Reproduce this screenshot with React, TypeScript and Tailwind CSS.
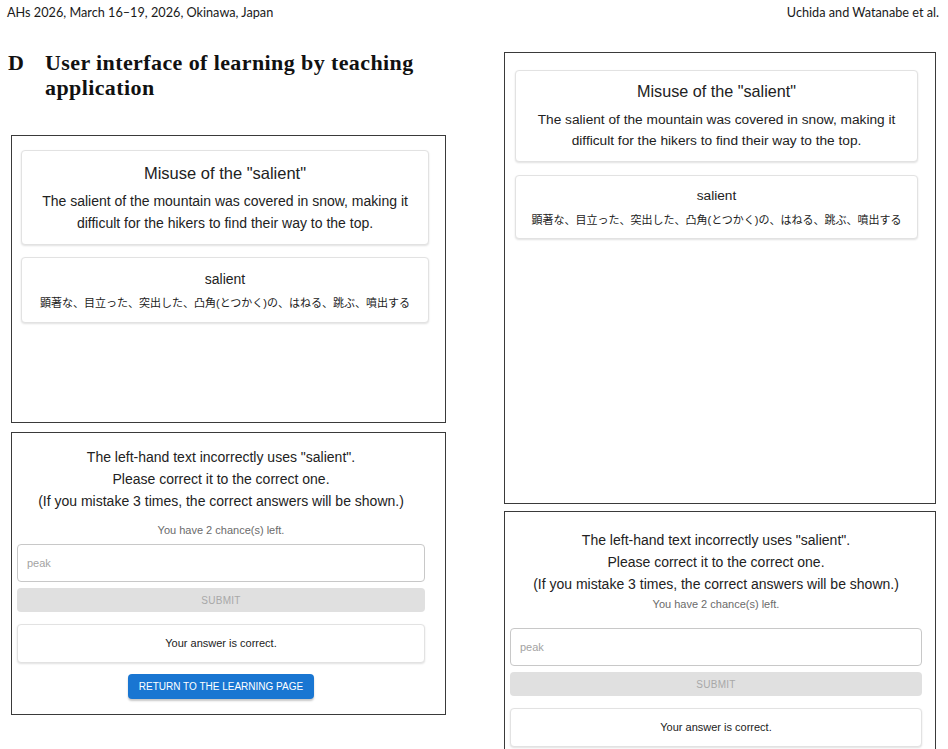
import React from "react";

type Size = "wide" | "narrow";

const sans = { fontFamily: '"Liberation Sans", Arial, "Noto Sans CJK JP", sans-serif' };

const WordCards: React.FC<{ size: Size }> = ({ size }) => {
  const wide = size === "wide";
  return (
    <>
      <div
        className={`rounded-[4px] border border-[#e2e2e2] bg-white text-center text-[#222] shadow-[0_1px_2px_rgba(0,0,0,0.12)] ${
          wide ? "w-[408px] pt-[11px] pb-[10px]" : "w-[403px] pt-[10px] pb-[10px]"
        }`}
      >
        <h2 className={wide ? "text-[16.5px] leading-[22px]" : "text-[16.2px] leading-[21px]"}>
          Misuse of the "salient"
        </h2>
        <p className={wide ? "mt-[6px] text-[14px] leading-[22px]" : "mt-[7px] text-[13.7px] leading-[21px]"}>
          The salient of the mountain was covered in snow, making it
          <br />
          difficult for the hikers to find their way to the top.
        </p>
      </div>
      <div
        className={`rounded-[4px] border border-[#e2e2e2] bg-white text-center text-[#222] shadow-[0_1px_2px_rgba(0,0,0,0.12)] ${
          wide ? "mt-[12px] w-[408px] pt-[11px] pb-[10px]" : "mt-[13px] w-[403px] pt-[10px] pb-[9px]"
        }`}
      >
        <div className={wide ? "text-[14px] leading-[20px]" : "text-[13.7px] leading-[20px]"}>salient</div>
        <div className="mt-[5px] text-[11px] leading-[18px]">
          顕著な、目立った、突出した、凸角(とつかく)の、はねる、跳ぶ、噴出する
        </div>
      </div>
    </>
  );
};

const AnswerForm: React.FC<{ size: Size }> = ({ size }) => {
  const wide = size === "wide";
  return (
    <div className={wide ? "w-[408px]" : "w-[412px]"}>
      <p className="text-center text-[14px] leading-[22px] text-[#222]">
        The left-hand text incorrectly uses "salient".
        <br />
        Please correct it to the correct one.
        <br />
        (If you mistake 3 times, the correct answers will be shown.)
      </p>
      <p
        className={`text-center text-[11px] leading-[16px] text-[#6b6b6b] ${
          wide ? "mt-[10px]" : "mt-[1px]"
        }`}
      >
        You have 2 chance(s) left.
      </p>
      <input
        readOnly
        placeholder="peak"
        className={`block h-[38px] w-full rounded-[4px] border border-[#c8c8c8] px-[9px] text-[11px] outline-none placeholder:text-[#a3a3a3] ${
          wide ? "mt-[6px]" : "mt-[16px]"
        }`}
        style={sans}
      />
      <button
        disabled
        className="mt-[6px] block h-[24px] w-full rounded-[4px] bg-[#e0e0e0] text-[10px] tracking-[0.3px] text-[#a8a8a8]"
        style={sans}
      >
        SUBMIT
      </button>
      <div className="mt-[12px] flex h-[39px] items-center justify-center rounded-[4px] border border-[#e2e2e2] bg-white text-[11px] text-[#222] shadow-[0_1px_2px_rgba(0,0,0,0.12)]">
        Your answer is correct.
      </div>
      {wide && (
        <div className="mt-[11px] flex justify-center">
          <button
            className="h-[25px] w-[186px] rounded-[4px] bg-[#1976d2] text-[10px] text-white shadow-[0_2px_2px_rgba(0,0,0,0.22)]"
            style={sans}
          >
            RETURN TO THE LEARNING PAGE
          </button>
        </div>
      )}
    </div>
  );
};

export default function App() {
  return (
    <div className="relative h-[749px] w-[948px] overflow-hidden bg-white text-black">
      {/* running head */}
      <div
        className="flex h-[24px] justify-between pl-[7px] pr-[9px] pt-[4px] text-[12.7px] leading-[16px] text-[#1a1a1a]"
        style={{ fontFamily: 'Lato, "Open Sans", sans-serif' }}
      >
        <span>AHs 2026, March 16–19, 2026, Okinawa, Japan</span>
        <span>Uchida and Watanabe et al.</span>
      </div>

      <div className="flex">
        {/* left column: section title + first screen */}
        <div className="w-[504px] shrink-0">
          <h1
            className="mt-[26px] flex px-[8px] text-[22px] font-bold leading-[25px] tracking-[0.4px] text-[#111]"
            style={{ fontFamily: '"Liberation Serif", "Times New Roman", serif' }}
          >
            <span className="w-[37px] shrink-0">D</span>
            <span>
              User interface of learning by teaching
              <br />
              application
            </span>
          </h1>

          <div style={sans}>
            <div className="ml-[11px] mt-[35px] h-[288px] w-[435px] border border-[#3a3a3a] pl-[9px] pt-[14px]">
              <WordCards size="wide" />
            </div>
            <div className="ml-[11px] mt-[9px] h-[283px] w-[435px] border border-[#3a3a3a] pl-[5px] pt-[13px]">
              <AnswerForm size="wide" />
            </div>
          </div>
        </div>

        {/* right column: second screen */}
        <div className="mt-[28px] w-[432px] shrink-0" style={sans}>
          <div className="h-[452px] w-[432px] border border-[#3a3a3a] pl-[10px] pt-[17px]">
            <WordCards size="narrow" />
          </div>
          <div className="mt-[7px] h-[300px] w-[432px] border border-[#3a3a3a] pl-[5px] pt-[17px]">
            <AnswerForm size="narrow" />
          </div>
        </div>
      </div>
    </div>
  );
}
